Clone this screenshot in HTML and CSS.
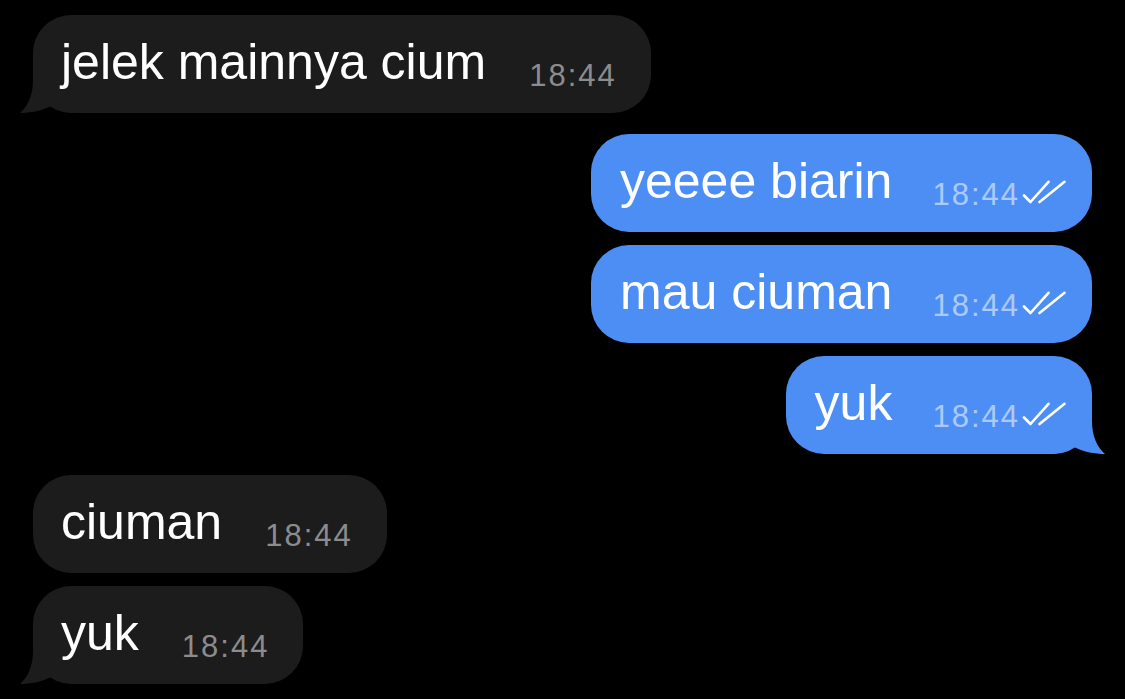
FILE: index.html
```html
<!DOCTYPE html>
<html>
<head>
<meta charset="utf-8">
<link rel="stylesheet" href="styles.css">
</head>
<body>
<div class="chat">
  <div class="group in">
    <div class="bubble has-tail">
      <svg class="tail" viewBox="0 0 58 45" width="58" height="45"><path d="M13 0 L13 12 C13 27 8 38 0 45 C10 45 21 43 31 38 C37 42 45 45 58 45 L58 0 Z"/></svg>
      <span class="text">jelek mainnya cium</span>
      <span class="meta">18:44</span>
    </div>
  </div>
  <div class="group out">
    <div class="bubble">
      <span class="text">yeeee biarin</span>
      <span class="meta">18:44<svg class="ticks" viewBox="0 0 44 24" width="44" height="24"><path d="M2 15.5 L8.5 22 L26.5 1.8 M17.5 22 L42.5 1.8"/></svg></span>
    </div>
    <div class="bubble">
      <span class="text">mau ciuman</span>
      <span class="meta">18:44<svg class="ticks" viewBox="0 0 44 24" width="44" height="24"><path d="M2 15.5 L8.5 22 L26.5 1.8 M17.5 22 L42.5 1.8"/></svg></span>
    </div>
    <div class="bubble has-tail">
      <svg class="tail" viewBox="0 0 58 45" width="58" height="45"><path d="M13 0 L13 12 C13 27 8 38 0 45 C10 45 21 43 31 38 C37 42 45 45 58 45 L58 0 Z"/></svg>
      <span class="text">yuk</span>
      <span class="meta">18:44<svg class="ticks" viewBox="0 0 44 24" width="44" height="24"><path d="M2 15.5 L8.5 22 L26.5 1.8 M17.5 22 L42.5 1.8"/></svg></span>
    </div>
  </div>
  <div class="group in">
    <div class="bubble">
      <span class="text">ciuman</span>
      <span class="meta">18:44</span>
    </div>
    <div class="bubble has-tail">
      <svg class="tail" viewBox="0 0 58 45" width="58" height="45"><path d="M13 0 L13 12 C13 27 8 38 0 45 C10 45 21 43 31 38 C37 42 45 45 58 45 L58 0 Z"/></svg>
      <span class="text">yuk</span>
      <span class="meta">18:44</span>
    </div>
  </div>
</div>
</body>
</html>
```

FILE: styles.css
```css
html, body {
  margin: 0;
  padding: 0;
  background: #000;
}

body {
  font-family: "Liberation Sans", Arial, sans-serif;
  -webkit-font-smoothing: antialiased;
}

.chat {
  display: flex;
  flex-direction: column;
  gap: 21px;
  padding: 15px 33px 0;
}

.group {
  display: flex;
  flex-direction: column;
  gap: 13px;
}

.group.in {
  align-items: flex-start;
}

.group.out {
  align-items: flex-end;
}

.bubble {
  position: relative;
  z-index: 0;
  display: flex;
  align-items: flex-end;
  gap: 43px;
  box-sizing: border-box;
  height: 98px;
  padding: 19px 34px 23px 28px;
  border-radius: 38px;
  background: #1c1c1d;
}

.out .bubble {
  gap: 40px;
  padding: 19px 26px 23px 29px;
  background: #4d8ef4;
}

.text {
  font-size: 50px;
  line-height: 56px;
  color: #fff;
  white-space: nowrap;
}

.meta {
  font-size: 31px;
  line-height: 28px;
  letter-spacing: 2px;
  color: #8c8c8e;
  white-space: nowrap;
}

.out .meta {
  color: rgba(255, 255, 255, 0.55);
}

.ticks {
  display: inline-block;
  vertical-align: 1px;
  margin-left: 2px;
}

.ticks path {
  fill: none;
  stroke: #fff;
  stroke-width: 2.6;
  stroke-linecap: round;
  stroke-linejoin: round;
}

.tail {
  position: absolute;
  z-index: -1;
  bottom: 0;
  left: -13px;
}

.in .tail path {
  fill: #1c1c1d;
}

.out .tail {
  left: auto;
  right: -13px;
  transform: scaleX(-1);
}

.out .tail path {
  fill: #4d8ef4;
}
```
